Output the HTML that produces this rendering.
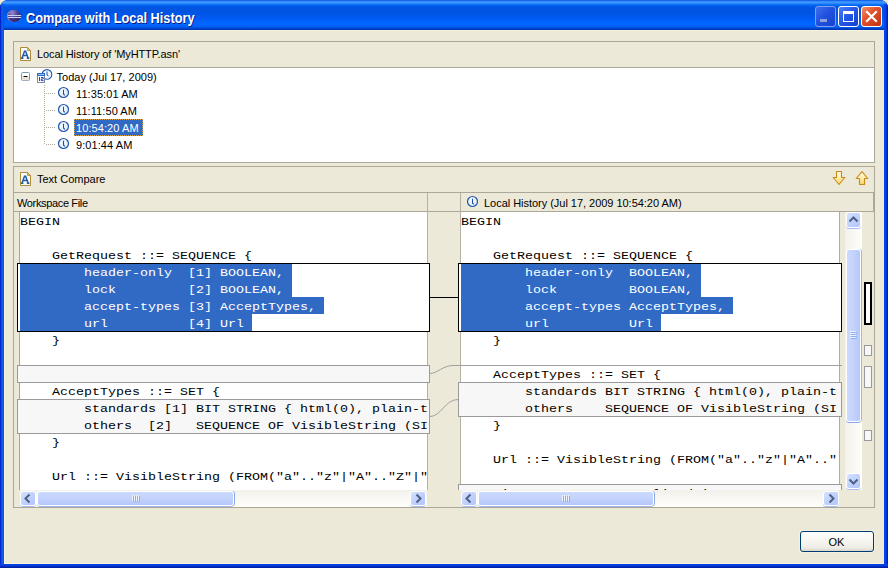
<!DOCTYPE html>
<html>
<head>
<meta charset="utf-8">
<title>Compare with Local History</title>
<style>
html,body{margin:0;padding:0;}
body{width:888px;height:568px;overflow:hidden;background:#ece9d8;font-family:"Liberation Sans",sans-serif;font-size:11px;color:#000;position:relative;}
.abs{position:absolute;}
#win{position:absolute;left:0;top:0;width:888px;height:568px;background:#0831d9;border-radius:8px 8px 0 0;overflow:hidden;}
#title{position:absolute;left:0;top:0;width:888px;height:30px;border-radius:8px 8px 0 0;
background:linear-gradient(to bottom,#0045d6 0px,#2f86fb 1px,#3c96ff 2.5px,#2a88fd 3.5px,#0f72fa 4.5px,#0463ee 5.5px,#0055e0 7.5px,#0054e2 12px,#0058ee 17px,#0062fb 21px,#0066ff 24px,#0062f8 26px,#0055e6 27.5px,#0044cc 28.5px,#0030a8 30px);}
#title .cap{position:absolute;left:26px;top:10px;font-weight:bold;font-size:14px;line-height:16px;color:#fff;white-space:pre;transform-origin:0 50%;transform:scaleX(0.91);text-shadow:1px 1px 0 #0a1883;}
#client{position:absolute;left:4px;top:30px;width:880px;height:534px;background:#ece9d8;}
.lb{position:absolute;left:0;top:4px;width:4px;height:564px;background:linear-gradient(to right,#0019cf 0,#0831d9 1px,#166aee 2px,#0855dd 3px,#0855dd 4px);}
.rb{position:absolute;left:884px;top:4px;width:4px;height:564px;background:linear-gradient(to right,#0a40e6 0,#0848f0 1px,#0034d4 2.5px,#00189c 4px);}
.bb{position:absolute;left:0;top:564px;width:888px;height:4px;background:linear-gradient(to bottom,#0a46e6 0,#0640e0 1px,#0030c8 2.5px,#00158c 4px);}
.tbtn{position:absolute;top:6px;width:21px;height:21px;border-radius:3px;box-sizing:border-box;border:1px solid #fff;}
.panel{position:absolute;box-sizing:border-box;border:1px solid #aca899;background:#ece9d8;}
.hl{position:absolute;height:1px;background:#aca899;}
.vl{position:absolute;width:1px;background:#aca899;}
.t{position:absolute;white-space:pre;line-height:13px;font-size:11px;}
.code{position:absolute;white-space:pre;font-family:"Liberation Mono",monospace;font-size:11.8px;letter-spacing:0;transform-origin:0 0;transform:scaleX(1.12994);line-height:17px;color:#000;}
.pane{position:absolute;overflow:hidden;background:#fff;}
.sel{position:absolute;height:17px;background:#316ac5;}
.box{position:absolute;box-sizing:border-box;border:1px solid #9a9a9c;background:#f7f7f7;}
.sb{position:absolute;background:linear-gradient(to bottom,#f3f1ec,#fefefb);}
.sbv{position:absolute;background:linear-gradient(to right,#f3f1ec,#fefefb);}
.sbtn{position:absolute;box-sizing:border-box;border:1px solid #fff;border-radius:3px;background:linear-gradient(135deg,#d6e2fe 0%,#c3d3fd 45%,#b3c4fa 100%);box-shadow:0 1px 0 #a8bdf0;}
.sbtn svg{display:block}
.sbtn.h{width:16px;height:15px;}
.sbtn.v{width:15px;height:16px;}
.thumbh{position:absolute;height:15px;box-sizing:border-box;border:1px solid #fff;border-radius:3px;background:linear-gradient(to bottom,#cbd9fd 0%,#c3d3fd 50%,#b5c6fb 100%);box-shadow:1px 0 0 #8aa8e4,0 1px 0 #9fb6ec;}
.thumbv{position:absolute;width:15px;box-sizing:border-box;border:1px solid #fff;border-radius:3px;background:linear-gradient(to right,#cbd9fd 0%,#c3d3fd 50%,#b5c6fb 100%);box-shadow:1px 0 0 #9fb6ec,0 1px 0 #8aa8e4;}
.mark{position:absolute;left:864px;width:8px;box-sizing:border-box;border:1px solid #9a9a9c;background:#f7f7f7;}
</style>
</head>
<body>
<div id="win">
 <div id="title">
  <svg class="abs" style="left:6px;top:8px" width="16" height="16" viewBox="0 0 16 16">
   <defs><radialGradient id="eg" cx="0.35" cy="0.25" r="0.8"><stop offset="0" stop-color="#9a8fd0"/><stop offset="0.45" stop-color="#54479a"/><stop offset="1" stop-color="#251c58"/></radialGradient></defs>
   <ellipse cx="7.6" cy="8" rx="6.6" ry="6.1" fill="#e9a0b8"/>
   <ellipse cx="8.2" cy="8" rx="6.6" ry="6.1" fill="url(#eg)"/>
   <path d="M2 7.5H15M2 9.5H15" stroke="#c9d2f2" stroke-width="1"/>
  </svg>
  <div class="cap">Compare with Local History</div>
  <!-- minimize (disabled look) -->
  <div class="tbtn" style="left:815px;border-color:#7fa2ee;background:linear-gradient(135deg,#3f6fec 0%,#1f50de 50%,#1743cf 100%);">
   <div class="abs" style="left:4px;top:12px;width:7px;height:3px;background:#8f9fe0"></div>
  </div>
  <!-- maximize -->
  <div class="tbtn" style="left:838px;background:linear-gradient(135deg,#4a7ff5 0%,#2457e6 50%,#1540cc 100%);">
   <div class="abs" style="left:4px;top:4px;width:11px;height:11px;box-sizing:border-box;border:1px solid #fff;border-top-width:3px"></div>
  </div>
  <!-- close -->
  <div class="tbtn" style="left:861px;background:linear-gradient(135deg,#f0906c 0%,#e2532c 40%,#c2300e 100%);">
   <svg class="abs" style="left:0;top:0" width="19" height="19" viewBox="0 0 19 19"><path d="M5 5L14 14M14 5L5 14" stroke="#fff" stroke-width="2.2" stroke-linecap="square"/></svg>
  </div>
 </div>
 <div class="lb"></div><div class="rb"></div><div class="bb"></div>
 <div id="client"></div>
 <div class="abs" style="left:4px;top:30px;width:880px;height:1px;background:#f6f2e0"></div>
 <div class="abs" style="left:4px;top:30px;width:1px;height:534px;background:#f6f2e0"></div>
 <div class="abs" style="left:4px;top:563px;width:880px;height:1px;background:#f6f2e0"></div>

 <!-- Panel 1 : Local History tree -->
 <div class="panel" style="left:13px;top:41px;width:862px;height:122px;"></div>
 <div class="hl" style="left:14px;top:67px;width:860px;"></div>
 <div class="abs" style="left:14px;top:68px;width:860px;height:94px;background:#fff"></div>
 <svg class="abs" style="left:20px;top:47px" width="12" height="14" viewBox="0 0 12 14">
  <path d="M0.5 0.5H7.5L10.5 3.5V13.5H0.5Z" fill="#fbfcff" stroke="#ad8a34"/>
  <path d="M7.5 0.5V3.5H10.5Z" fill="#eccb72" stroke="#ad8a34" stroke-width="0.8"/>
  <path d="M2 11.2L4.5 4.3H5.6L8.2 11.2M2.8 8.6H7.4" fill="none" stroke="#2259a8" stroke-width="1.5"/>
  <path d="M1 10.5H3.4V12H1ZM6.8 10.5H9.4V12H6.8Z" fill="#2259a8"/>
 </svg>
 <div class="t" style="left:37px;top:48px;letter-spacing:-0.1px">Local History of 'MyHTTP.asn'</div>

 <!-- tree -->
 <svg class="abs" style="left:14px;top:68px" width="160" height="94" viewBox="0 0 160 94">
  <!-- dotted connectors -->
  <path d="M30.5 17V77" stroke="#b0ac9c" stroke-width="1" stroke-dasharray="1 1"/>
  <path d="M32 25.5H41M32 42.5H41M32 59.5H41M32 76.5H41" stroke="#b0ac9c" stroke-width="1" stroke-dasharray="1 1"/>
  <!-- expander -->
  <rect x="7.5" y="4.5" width="8" height="8" rx="1" fill="#fff" stroke="#7b98b8"/>
  <rect x="8" y="9" width="7" height="3.5" fill="#dcd8cc" opacity="0.7"/>
  <path d="M9.5 8.5H13.5" stroke="#000" stroke-width="1"/>
  <!-- calendar + clock -->
  <circle cx="33" cy="6.4" r="4.8" fill="#f0f6ff" stroke="#2459b0" stroke-width="1.1"/>
  <path d="M33 3.5V7L34.5 8" stroke="#2459b0" stroke-width="1" fill="none"/>
  <rect x="23.5" y="5.5" width="7" height="9" fill="#fff" stroke="#7c88a2"/>
  <rect x="23" y="5" width="8" height="3" fill="#2c6cc8"/>
  <path d="M24 6.5H30" stroke="#9cc0f0" stroke-width="1"/>
  <path d="M25.5 9V13M27 9.5H29.2V11H27.3V12.6H29.5" stroke="#1f4a9c" stroke-width="1" fill="none"/>
 </svg>
 <div class="t" style="left:56.5px;top:71px;letter-spacing:0.03px">Today (Jul 17, 2009)</div>
 <div class="abs" style="left:74px;top:119px;width:69px;height:17px;box-sizing:border-box;background:#316ac5;border:1px dotted #d6a24a;"></div>
 <div class="t" style="left:76px;top:88px;letter-spacing:0.08px;">11:35:01 AM</div>
 <div class="t" style="left:76px;top:105px;letter-spacing:0.08px;">11:11:50 AM</div>
 <div class="t" style="left:76px;top:122px;letter-spacing:0.08px;color:#fff">10:54:20 AM</div>
 <div class="t" style="left:76px;top:139px;letter-spacing:0.08px;">9:01:44 AM</div>
 <svg class="abs" style="left:57px;top:86px" width="14" height="66" viewBox="0 0 14 66">
  <g id="clk"><circle cx="6.5" cy="6.5" r="5" fill="#e6f0fb" stroke="#2456aa" stroke-width="1.2"/><circle cx="6" cy="5.8" r="2.6" fill="#f4f9ff"/><path d="M6.5 3.8V8L7.8 9.3" stroke="#1f4c9c" stroke-width="1.1" fill="none"/></g>
  <use href="#clk" y="17"/><use href="#clk" y="34"/><use href="#clk" y="51"/>
 </svg>

 <!-- Panel 2 : Text Compare -->
 <div class="panel" style="left:13px;top:166px;width:862px;height:342px;"></div>
 <div class="hl" style="left:14px;top:192px;width:860px;"></div>
 <div class="hl" style="left:14px;top:211px;width:860px;"></div>
 <svg class="abs" style="left:20px;top:172px" width="12" height="14" viewBox="0 0 12 14">
  <path d="M0.5 0.5H7.5L10.5 3.5V13.5H0.5Z" fill="#fbfcff" stroke="#ad8a34"/>
  <path d="M7.5 0.5V3.5H10.5Z" fill="#eccb72" stroke="#ad8a34" stroke-width="0.8"/>
  <path d="M2 11.2L4.5 4.3H5.6L8.2 11.2M2.8 8.6H7.4" fill="none" stroke="#2259a8" stroke-width="1.5"/>
  <path d="M1 10.5H3.4V12H1ZM6.8 10.5H9.4V12H6.8Z" fill="#2259a8"/>
 </svg>
 <div class="t" style="left:37px;top:173px;letter-spacing:0px">Text Compare</div>
 <!-- nav arrows -->
 <svg class="abs" style="left:832px;top:171px" width="38" height="15" viewBox="0 0 38 15">
  <defs><linearGradient id="ag" x1="0" y1="0" x2="0" y2="1"><stop offset="0" stop-color="#fffdf0"/><stop offset="0.45" stop-color="#fdeeb0"/><stop offset="1" stop-color="#fbd465"/></linearGradient></defs>
  <path d="M4.5 0.5H9.5V6.5H12.8L7 13.5L1.2 6.5H4.5Z" fill="url(#ag)" stroke="#c98a1c" stroke-width="1.1" stroke-linejoin="round"/>
  <path d="M27.5 13.5H32.5V7.5H35.8L30 0.7L24.2 7.5H27.5Z" fill="url(#ag)" stroke="#c98a1c" stroke-width="1.1" stroke-linejoin="round"/>
 </svg>

 <!-- sub headers -->
 <div class="vl" style="left:873px;top:193px;height:18px;"></div>
 <div class="t" style="left:17px;top:197px;letter-spacing:-0.35px">Workspace File</div>
 <div class="vl" style="left:427px;top:193px;height:297px;background:#b5b2a1"></div>
 <div class="vl" style="left:460px;top:193px;height:297px;background:#b5b2a1"></div>
 <svg class="abs" style="left:466px;top:195px" width="14" height="14" viewBox="0 0 14 14"><use href="#clk"/></svg>
 <div class="t" style="left:484px;top:197px;letter-spacing:-0.03px">Local History (Jul 17, 2009 10:54:20 AM)</div>

 <!-- LEFT editor -->
 <div class="abs" style="left:19px;top:212px;width:1px;height:278px;background:#a6a6a0"></div>
 <div class="abs" style="left:20px;top:212px;width:407px;height:278px;background:#fff"></div>
 <div class="abs" style="left:17px;top:263px;width:413px;height:69px;box-sizing:border-box;border:1px solid #000;background:#fff"></div>
 <div class="box" style="left:17px;top:365px;width:413px;height:18px;"></div>
 <div class="box" style="left:17px;top:399px;width:413px;height:35px;"></div>
 <div class="pane" style="left:20px;top:212px;width:407px;height:278px;background:transparent">
  <div class="sel" style="left:0;top:52px;width:272px;height:16px"></div>
  <div class="sel" style="left:0;top:68px;width:272px"></div>
  <div class="sel" style="left:0;top:85px;width:304px"></div>
  <div class="sel" style="left:0;top:102px;width:232px"></div>
<div class="code" style="left:0px;top:2px;">BEGIN

    GetRequest ::= SEQUENCE {
<span style="color:#fff">        header-only  [1] BOOLEAN,
        lock         [2] BOOLEAN,
        accept-types [3] AcceptTypes,
        url          [4] Url</span>
    }


    AcceptTypes ::= SET {
        standards [1] BIT STRING { html(0), plain-text(1), gif(2), jpeg(3) },
        others  [2]   SEQUENCE OF VisibleString (SIZE(4)) }
    }

    Url ::= VisibleString (FROM("a".."z"|"A".."Z"|"0".."9"|"./-_~%#"))
</div>
 </div>

 <!-- center connectors -->
 <svg class="abs" style="left:430px;top:212px" width="28" height="278" viewBox="0 0 28 278">
  <path d="M0 85.5H28" stroke="#000" stroke-width="1"/>
  <path d="M0 161.5C7 161.5 13 153.5 23 153.5H28" fill="none" stroke="#a0a0a0" stroke-width="1"/>
  <path d="M0 204.5C11 204.5 15 187.5 28 187.5" fill="none" stroke="#a0a0a0" stroke-width="1"/>
 </svg>

 <!-- RIGHT editor -->
 <div class="abs" style="left:461px;top:212px;width:378px;height:278px;background:#fff"></div>
 <div class="abs" style="left:839px;top:212px;width:1px;height:278px;background:#b0ad9c"></div>
 <div class="abs" style="left:458px;top:365px;width:384px;height:1px;background:#a0a0a0"></div>
 <div class="abs" style="left:458px;top:263px;width:384px;height:69px;box-sizing:border-box;border:1px solid #000;background:#fff"></div>
 <div class="box" style="left:458px;top:382px;width:384px;height:35px;"></div>
 <div class="box" style="left:458px;top:484px;width:384px;height:6px;border-bottom:none"></div>
 <div class="pane" style="left:461px;top:212px;width:376px;height:278px;background:transparent">
  <div class="sel" style="left:0;top:52px;width:240px;height:16px"></div>
  <div class="sel" style="left:0;top:68px;width:240px"></div>
  <div class="sel" style="left:0;top:85px;width:272px"></div>
  <div class="sel" style="left:0;top:102px;width:200px"></div>
<div class="code" style="left:0px;top:2px;">BEGIN

    GetRequest ::= SEQUENCE {
<span style="color:#fff">        header-only  BOOLEAN,
        lock         BOOLEAN,
        accept-types AcceptTypes,
        url          Url</span>
    }

    AcceptTypes ::= SET {
        standards BIT STRING { html(0), plain-text(1), gif(2), jpeg(3) },
        others    SEQUENCE OF VisibleString (SIZE(4)) }
    }

    Url ::= VisibleString (FROM("a".."z"|"A".."Z"|"0".."9"|"./-_~%#"))

    TimeStamp ::= GeneralizedTime
</div>
 </div>

 <!-- horizontal scrollbars -->
 <div class="sb" style="left:20px;top:490px;width:407px;height:17px;"></div>
 <div class="sbtn h" style="left:20px;top:491px;"><svg width="14" height="13" viewBox="0 0 14 13"><path d="M8.5 2.5L4.5 6.5L8.5 10.5" fill="none" stroke="#4d6185" stroke-width="2"/></svg></div>
 <div class="thumbh" style="left:37px;top:491px;width:197px;"></div>
 <div class="sbtn h" style="left:410px;top:491px;"><svg width="14" height="13" viewBox="0 0 14 13"><path d="M5.5 2.5L9.5 6.5L5.5 10.5" fill="none" stroke="#4d6185" stroke-width="2"/></svg></div>
 <svg class="abs" style="left:132px;top:495px" width="8" height="7"><path d="M0.5 0V6M2.5 0V6M4.5 0V6M6.5 0V6" stroke="#eef4fe"/><path d="M1.5 1V7M3.5 1V7M5.5 1V7M7.5 1V7" stroke="#8cb0f8"/></svg>

 <div class="sb" style="left:461px;top:490px;width:378px;height:17px;"></div>
 <div class="sbtn h" style="left:461px;top:491px;"><svg width="14" height="13" viewBox="0 0 14 13"><path d="M8.5 2.5L4.5 6.5L8.5 10.5" fill="none" stroke="#4d6185" stroke-width="2"/></svg></div>
 <div class="thumbh" style="left:478px;top:491px;width:176px;"></div>
 <div class="sbtn h" style="left:823px;top:491px;"><svg width="14" height="13" viewBox="0 0 14 13"><path d="M5.5 2.5L9.5 6.5L5.5 10.5" fill="none" stroke="#4d6185" stroke-width="2"/></svg></div>
 <svg class="abs" style="left:562px;top:495px" width="8" height="7"><path d="M0.5 0V6M2.5 0V6M4.5 0V6M6.5 0V6" stroke="#eef4fe"/><path d="M1.5 1V7M3.5 1V7M5.5 1V7M7.5 1V7" stroke="#8cb0f8"/></svg>

 <!-- vertical scrollbar -->
 <div class="sbv" style="left:845px;top:212px;width:17px;height:278px;"></div>
 <div class="sbtn v" style="left:846px;top:212px;"><svg width="13" height="14" viewBox="0 0 13 14"><path d="M2.5 8.5L6.5 4.5L10.5 8.5" fill="none" stroke="#4d6185" stroke-width="2"/></svg></div>
 <div class="thumbv" style="left:846px;top:249px;height:173px;"></div>
 <div class="sbtn v" style="left:846px;top:473px;"><svg width="13" height="14" viewBox="0 0 13 14"><path d="M2.5 5.5L6.5 9.5L10.5 5.5" fill="none" stroke="#4d6185" stroke-width="2"/></svg></div>
 <svg class="abs" style="left:850px;top:331px" width="7" height="8"><path d="M0 0.5H6M0 2.5H6M0 4.5H6M0 6.5H6" stroke="#eef4fe"/><path d="M1 1.5H7M1 3.5H7M1 5.5H7M1 7.5H7" stroke="#8cb0f8"/></svg>

 <!-- overview ruler marks -->
 <div class="abs" style="left:864px;top:282px;width:8px;height:43px;box-sizing:border-box;border:2px solid #000;background:#fff"></div>
 <div class="mark" style="top:345px;height:11px;"></div>
 <div class="mark" style="top:366px;height:22px;"></div>
 <div class="mark" style="top:430px;height:11px;"></div>

 <!-- OK button -->
 <div class="abs" style="left:800px;top:531px;width:74px;height:21px;box-sizing:border-box;border:1px solid #003c74;border-radius:3px;background:linear-gradient(to bottom,#fff 0%,#f6f5f0 50%,#ecebe4 85%,#d9d6c8 100%);box-shadow:0 0 0 1px rgba(250,246,230,0.6);"></div>
 <div class="t" style="left:799px;top:536px;width:75px;text-align:center;">OK</div>
</div>
</body>
</html>
